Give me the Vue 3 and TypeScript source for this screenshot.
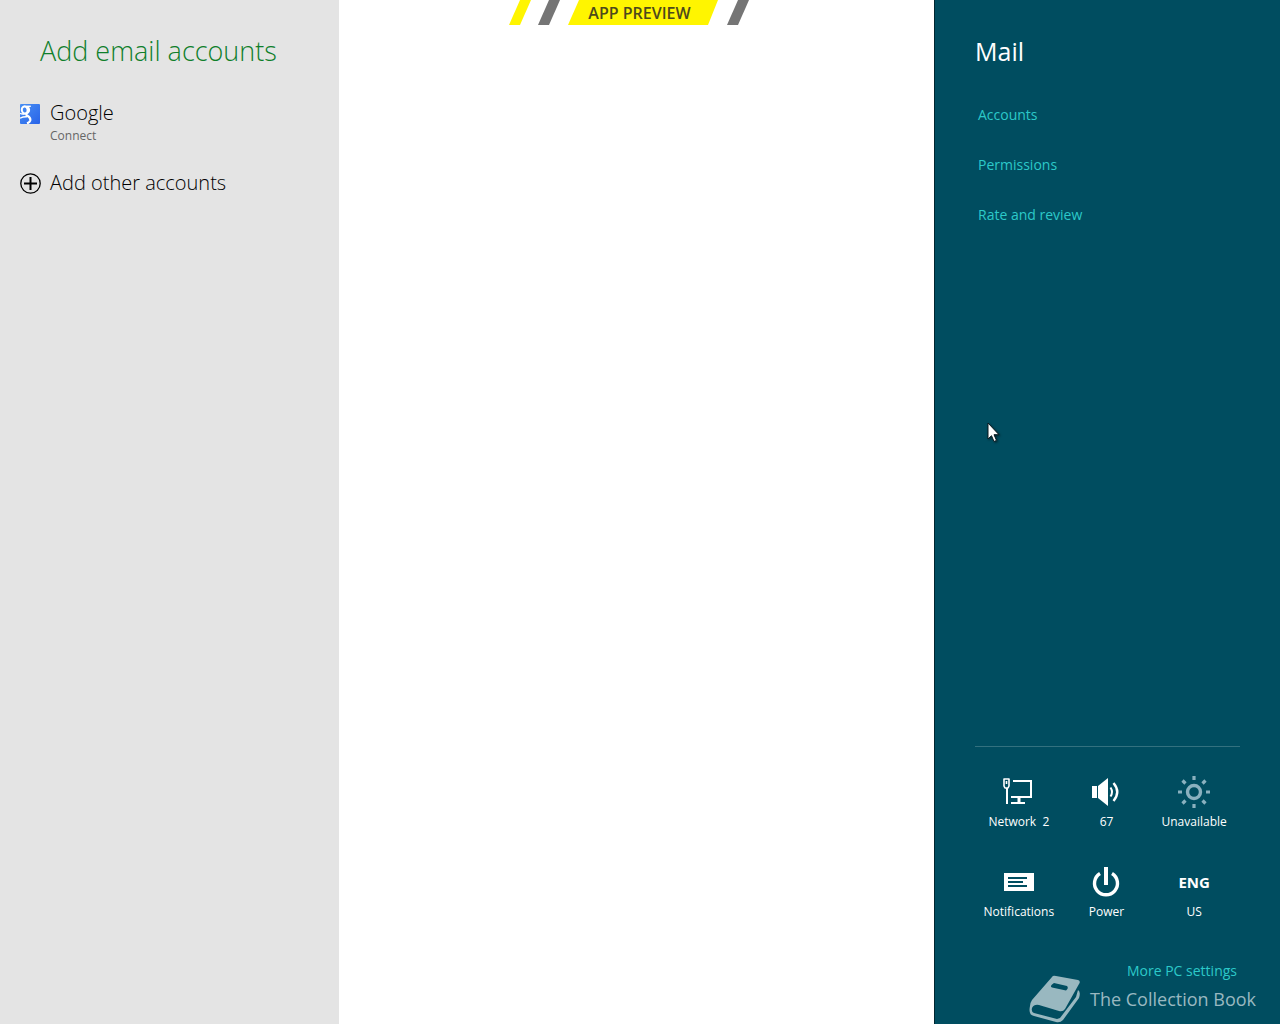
<script setup lang="ts">
interface PaneLink {
  label: string
  href: string
}

const links: PaneLink[] = [
  { label: 'Accounts', href: '#accounts' },
  { label: 'Permissions', href: '#permissions' },
  { label: 'Rate and review', href: '#review' },
]
</script>

<template>
  <div class="screen">
    <aside class="accounts">
      <h1 class="accounts-title">Add email accounts</h1>
      <button type="button" class="account">
        <svg class="account-icon" viewBox="0 0 21 21" aria-hidden="true">
          <defs>
            <linearGradient id="tile" x1="0" y1="0" x2="1" y2="1">
              <stop offset="0" stop-color="#4a90f4" />
              <stop offset="1" stop-color="#2863e8" />
            </linearGradient>
          </defs>
          <rect width="20" height="20" y="1" rx="1" fill="url(#tile)" />
          <g fill="none" stroke="#fff" transform="translate(0 1)">
            <ellipse cx="4.7" cy="6" rx="2.9" ry="3.5" stroke-width="2" transform="rotate(-12 4.7 6)" />
            <path d="M4 2.3H10.8" stroke-width="1.4" />
            <path d="M7.5 2.8Q9.6 4.5 8.8 7.2Q8 8.6 6.7 9.4Q5.6 10.600 7.400 11.7C9.600 13 10.8 14.4 10.2 16.600Q9.500 18.5 7 19.4" stroke-width="2.2" />
            <path d="M0 14.2Q3 12.5 7 12.7M0 9.3Q2 10.4 4.7 9.7" stroke-width="1.4" />
          </g>
        </svg>
        <span class="account-text">
          <span class="account-name">Google</span>
          <span class="account-note">Connect</span>
        </span>
      </button>
      <button type="button" class="account">
        <svg class="account-icon" viewBox="0 0 21 21" fill="none" stroke="#000" aria-hidden="true">
          <circle cx="10.5" cy="10.5" r="9.7" stroke-width="1.3" />
          <path d="M4 10.5H17M10.5 4V17" stroke-width="2" />
        </svg>
        <span class="account-text">
          <span class="account-name">Add other accounts</span>
        </span>
      </button>
    </aside>

    <main class="stage">
      <div class="preview">
        <svg class="stripes" width="240" height="25" viewBox="0 0 240 25" aria-hidden="true">
          <path d="M11 0H22L11 25H0Z" fill="#fff500" />
          <path d="M40 0H51L40 25H29Z" fill="#757575" />
          <path d="M70 0H209L199 25H59Z" fill="#fff500" />
          <path d="M229 0H240L229 25H218Z" fill="#757575" />
        </svg>
        <span class="preview-label">APP PREVIEW</span>
      </div>
    </main>

    <aside class="settings">
      <h2 class="settings-title">Mail</h2>
      <nav class="links">
        <a v-for="link in links" :key="link.label" class="link" :href="link.href">{{ link.label }}</a>
      </nav>

      <div class="tiles">
        <button type="button" class="tile">
          <svg class="glyph" viewBox="0 0 32 32" fill="none" stroke="#fff" aria-hidden="true">
            <path d="M10 5H28V21H8" stroke-width="2" />
            <path d="M16 22V27" stroke-width="3" />
            <path d="M8 27H22" stroke-width="2" />
            <path d="M1 3H6V10L5 12H2L1 10Z" stroke-width="1.6" stroke-linejoin="round" />
            <path d="M3.5 5V8" stroke-width="1.6" />
            <path d="M4 12V28" stroke-width="2" />
          </svg>
          <span class="tile-label">Network&nbsp; 2</span>
        </button>
        <button type="button" class="tile">
          <svg class="glyph" viewBox="0 0 32 32" fill="none" stroke="#fff" aria-hidden="true">
            <path d="M2 10H7V22H2ZM8 10L18 2V30L8 22Z" fill="#fff" stroke="none" />
            <path d="M20.500 11.500Q23.500 16 20.500 20.500" stroke-width="2" />
            <path d="M23.500 7Q31 16 23.500 25" stroke-width="2.400" />
          </svg>
          <span class="tile-label">67</span>
        </button>
        <button type="button" class="tile">
          <svg class="glyph" viewBox="0 0 32 32" fill="none" stroke="#8ab1bf" aria-hidden="true">
            <circle cx="16" cy="16" r="6.500" stroke-width="3.400" />
            <path d="M16 0V4M16 28V32M0 16H4M28 16H32M4.500 4.500L7.500 7.500M24.500 24.500L27.500 27.500M27.500 4.500L24.500 7.500M7.500 24.500L4.500 27.500" stroke-width="3.200" />
          </svg>
          <span class="tile-label">Unavailable</span>
        </button>
        <button type="button" class="tile">
          <svg class="glyph" viewBox="0 0 32 32" aria-hidden="true">
            <path d="M1 7H31V25H1Z" fill="#fff" />
            <path d="M5 12H24M5 16H20M5 20H24" fill="none" stroke="#004d60" stroke-width="2" />
          </svg>
          <span class="tile-label">Notifications</span>
        </button>
        <button type="button" class="tile">
          <svg class="glyph" viewBox="0 0 32 32" fill="none" stroke="#fff" aria-hidden="true">
            <path d="M10 7.500A11.500 11.500 0 1 0 22 7.500" stroke-width="3.400" />
            <path d="M16 1V19" stroke-width="4" />
          </svg>
          <span class="tile-label">Power</span>
        </button>
        <button type="button" class="tile">
          <span class="glyph lang">ENG</span>
          <span class="tile-label">US</span>
        </button>
      </div>

      <a class="link more" href="#pc-settings">More PC settings</a>

      <svg class="pointer" width="14" height="22" viewBox="0 0 14 22" aria-hidden="true">
        <path d="M1 1V17L4.500 13.700L7 19.500L9.500 18.400L7 12.700H12Z" fill="#fff" stroke="#0a1a20" stroke-width="1" />
      </svg>
    </aside>

    <div class="watermark">
      <svg width="52" height="48" viewBox="0 0 52 48" aria-hidden="true">
        <path d="M24 2Q25 0 28 1L50 5Q53 6 51 9L37 34Q35 37 31 36L11 30Q6 29 4 33Q3 37 6 38L29 44L32 43L48 22L50 15Q53 17 51 23L35 45Q32 48 28 47L6 41Q0 40 2 31Q2 28 4 25Z" fill="#99b8c0" />
        <path d="M26 8L39 11Q41 13 38 15.500L24 12.500Q21 11 26 8Z" fill="#004d60" />
      </svg>
      <span>The Collection Book</span>
    </div>
  </div>
</template>

<style>
body {
  margin: 0;
}
</style>

<style scoped>
.screen {
  position: relative;
  display: flex;
  min-height: 100vh;
  background: #fff;
  font-family: "Open Sans", "Noto Sans", sans-serif;
}

h1,
h2 {
  margin: 0;
  font-weight: 300;
}

button {
  border: 0;
  padding: 0;
  background: none;
  color: inherit;
  font: inherit;
}

.accounts {
  box-sizing: border-box;
  flex: 0 0 339px;
  display: flex;
  flex-direction: column;
  align-items: flex-start;
  gap: 24px;
  padding: 30px 20px;
  background: #e4e4e4;
  color: #000;
}

.accounts-title {
  padding: 0 0 2px 20px;
  font-size: 27px;
  line-height: 42px;
  color: #0f7f2b;
}

.account {
  display: flex;
  align-items: flex-start;
  gap: 9px;
  text-align: left;
  font-weight: 300;
}

.account-icon {
  width: 21px;
  height: 21px;
  margin-top: 5px;
}

.account-text {
  display: flex;
  flex-direction: column;
}

.account-name {
  font-size: 20px;
  line-height: 30px;
}

.account-note {
  font-size: 12px;
  line-height: 16px;
  font-weight: 400;
  color: #666;
}

.stage {
  flex: 1;
  display: flex;
  justify-content: center;
  align-items: flex-start;
}

.preview {
  display: grid;
  justify-items: center;
  align-items: center;
  margin-right: 16px;
}

.preview > * {
  grid-area: 1 / 1;
}

.preview-label {
  padding-left: 22px;
  font-size: 16px;
  line-height: 24px;
  font-weight: 600;
  color: #4d4a1c;
}

.settings {
  position: relative;
  box-sizing: border-box;
  flex: 0 0 346px;
  display: flex;
  flex-direction: column;
  padding: 30px 40px 43px;
  border-left: 1px solid #002630;
  background: #004d60;
  color: #fff;
}

.settings-title {
  font-size: 25px;
  line-height: 42px;
  font-weight: 400;
}

.links {
  display: flex;
  flex-direction: column;
  align-items: flex-start;
  gap: 30px;
  margin-top: 33px;
  padding-left: 3px;
}

.link {
  font-size: 14px;
  line-height: 20px;
  color: #2cc9c9;
  text-decoration: none;
}

.tiles {
  display: grid;
  grid-template-columns: repeat(3, 1fr);
  row-gap: 35px;
  margin-top: auto;
  padding: 29px 2px 0 0;
  border-top: 1px solid #33717f;
}

.tile {
  display: flex;
  flex-direction: column;
  align-items: center;
  gap: 5px;
}

.glyph {
  width: 32px;
  height: 32px;
}

.lang {
  display: flex;
  align-items: center;
  justify-content: center;
  font-size: 15px;
  font-weight: 700;
}

.tile-label {
  font-size: 12px;
  line-height: 18px;
  white-space: nowrap;
}

.more {
  align-self: flex-end;
  margin-top: 40px;
  padding-right: 3px;
}

.pointer {
  position: absolute;
  top: 422px;
  left: 52px;
  filter: drop-shadow(1px 1px 1px rgba(0, 0, 0, 0.5));
}

.watermark {
  position: absolute;
  right: 24px;
  bottom: 1px;
  display: flex;
  align-items: center;
  gap: 10px;
  font-size: 18px;
  line-height: 24px;
  color: #99b8c0;
}
</style>
